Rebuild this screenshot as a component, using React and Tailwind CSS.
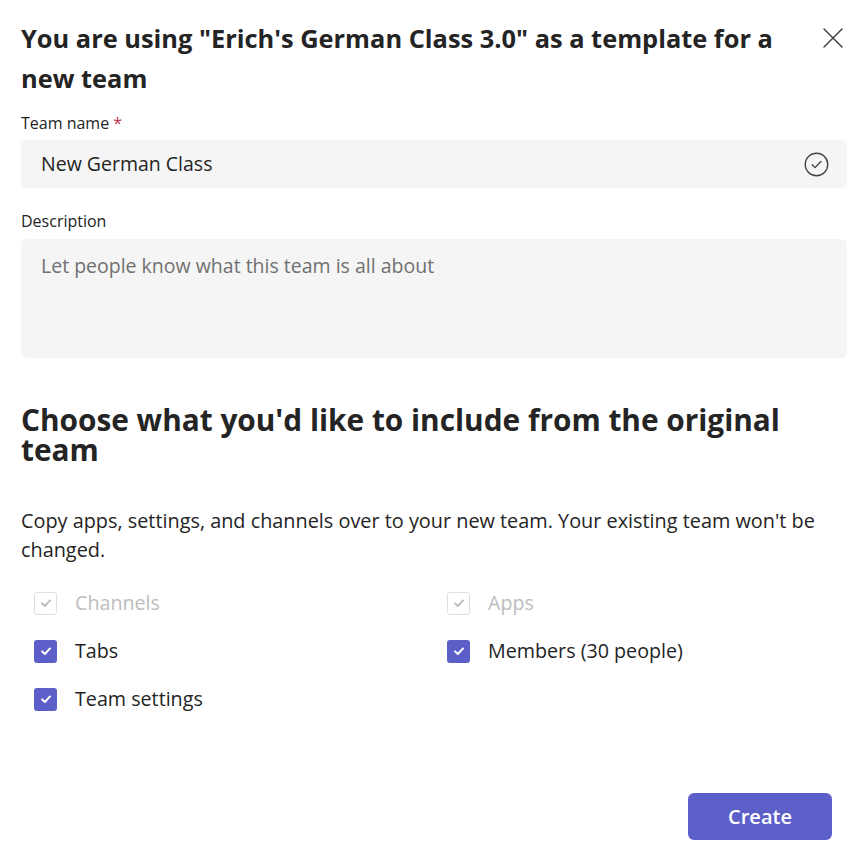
import { useState } from 'react';

const font = { fontFamily: '"Open Sans", "Noto Sans", sans-serif' };

function CheckItem({ label, checked, disabled, onToggle }) {
  const box = disabled
    ? 'border border-[#e0e0e0] bg-white text-[#bdbdbd]'
    : checked
      ? 'bg-[#5b5fc7] text-white'
      : 'border border-[#616161] bg-white text-transparent';
  return (
    <button
      type="button"
      onClick={disabled ? undefined : onToggle}
      className="flex items-center h-12 text-left"
    >
      <span className={`ml-[13px] w-[23px] h-[23px] rounded-[3px] flex items-center justify-center ${box}`}>
        <svg width="14" height="14" viewBox="0 0 12 12" fill="none">
          <path d="M2.6 6.3 L5 8.6 L9.5 3.8" stroke="currentColor" strokeWidth="1.7" strokeLinecap="round" strokeLinejoin="round" />
        </svg>
      </span>
      <span className={`ml-[18px] text-[19.7px] ${disabled ? 'text-[#bdbdbd]' : 'text-[#242424]'}`}>{label}</span>
    </button>
  );
}

export default function App() {
  const [name, setName] = useState('New German Class');
  const [desc, setDesc] = useState('');
  const [opts, setOpts] = useState({ tabs: true, settings: true, members: true });

  const toggle = (k) => setOpts((o) => ({ ...o, [k]: !o[k] }));

  return (
    <div style={font} className="w-[865px] h-[850px] bg-white pl-[21px] pr-[18px] pt-[18px] text-[#242424] flex flex-col">
      {/* header */}
      <div className="flex items-start justify-between">
        <h1 className="text-[25.4px] leading-[40px] font-bold w-[775px]">
          You are using "Erich's German Class 3.0" as a template for a new team
        </h1>
        <button type="button" className="mt-[9px] mr-[3px] text-[#424242]">
          <svg width="22" height="22" viewBox="0 0 22 22" fill="none">
            <path d="M2 2 L20 20 M20 2 L2 20" stroke="currentColor" strokeWidth="1.5" strokeLinecap="round" />
          </svg>
        </button>
      </div>

      <label className="mt-[14px] text-[16px] leading-[22px] text-[#242424]">
        Team name <span className="text-[#c4314b]">*</span>
      </label>
      <div className="mt-[6px] h-12 bg-[#f5f5f5] rounded-[6px] flex items-center pl-5 pr-[18px]">
        <input
          value={name}
          onChange={(e) => setName(e.target.value)}
          className="flex-1 bg-transparent outline-none text-[19.5px] text-[#242424]"
          style={font}
        />
        <svg width="25" height="25" viewBox="0 0 24 24" fill="none" className="text-[#424242]">
          <circle cx="12" cy="12" r="10.8" stroke="currentColor" strokeWidth="1.3" />
          <path d="M7.8 12.3 L10.6 15 L16.2 9.2" stroke="currentColor" strokeWidth="1.3" strokeLinecap="round" strokeLinejoin="round" />
        </svg>
      </div>

      <label className="mt-[22px] text-[16px] leading-[22px]">Description</label>
      <textarea
        value={desc}
        onChange={(e) => setDesc(e.target.value)}
        placeholder="Let people know what this team is all about"
        style={font}
        className="mt-[7px] h-[119px] resize-none bg-[#f5f5f5] rounded-[6px] px-5 pt-[12px] text-[19.5px] leading-[30px] outline-none placeholder:text-[#707070]"
      />

      <h2 className="mt-[47px] text-[29.8px] leading-[30px] font-bold">
        Choose what you'd like to include from the original team
      </h2>

      <p className="mt-[41px] text-[19.85px] leading-[29px] pr-[10px]">
        Copy apps, settings, and channels over to your new team. Your existing team won't be changed.
      </p>

      <div className="mt-[15px] grid grid-cols-[413px_1fr]">
        <CheckItem label="Channels" checked disabled />
        <CheckItem label="Apps" checked disabled />
        <CheckItem label="Tabs" checked={opts.tabs} onToggle={() => toggle('tabs')} />
        <CheckItem label="Members (30 people)" checked={opts.members} onToggle={() => toggle('members')} />
        <CheckItem label="Team settings" checked={opts.settings} onToggle={() => toggle('settings')} />
      </div>

      <div className="mt-auto mb-[10px] flex justify-end pr-[15px]">
        <button type="button" className="w-[144px] h-[47px] rounded-[6px] bg-[#5b5fc7] text-white text-[20px] font-semibold">
          Create
        </button>
      </div>
    </div>
  );
}
